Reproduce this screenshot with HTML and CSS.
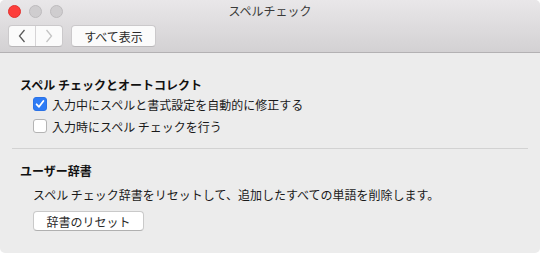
FILE: index.html
```html
<!DOCTYPE html>
<html lang="ja">
<head>
    <meta charset="UTF-8">
    <title>スペルチェック</title>
    <link rel="stylesheet" href="styles.css">
</head>
<body>
    <div class="window">
        <div class="toolbar">
            <div class="title-row">
                <div class="lights">
                    <span class="light red"></span>
                    <span class="light"></span>
                    <span class="light"></span>
                </div>
                <div class="title">スペルチェック</div>
            </div>
            <div class="tool-row">
                <div class="segmented">
                    <button class="seg">
                        <svg width="8" height="14" viewBox="0 0 8 14"><path d="M6.5 1 L1.5 7 L6.5 13" fill="none" stroke="#5a5a5a" stroke-width="1.3"/></svg>
                    </button>
                    <button class="seg">
                        <svg width="8" height="14" viewBox="0 0 8 14"><path d="M1.5 1 L6.5 7 L1.5 13" fill="none" stroke="#c4c4c4" stroke-width="1.3"/></svg>
                    </button>
                </div>
                <button class="tool-btn">すべて表示</button>
            </div>
        </div>

        <div class="content">
            <div class="section">
                <h2>スペル チェックとオートコレクト</h2>
                <label class="check-row">
                    <span class="box checked">
                        <svg width="14" height="14" viewBox="0 0 14 14"><path d="M3.6 7.3 L6 9.8 L10.4 4" fill="none" stroke="#fff" stroke-width="1.8" stroke-linecap="round" stroke-linejoin="round"/></svg>
                    </span>
                    入力中にスペルと書式設定を自動的に修正する
                </label>
                <label class="check-row">
                    <span class="box"></span>
                    入力時にスペル チェックを行う
                </label>
            </div>

            <hr class="divider">

            <div class="section">
                <h2>ユーザー辞書</h2>
                <p class="desc">スペル チェック辞書をリセットして、追加したすべての単語を削除します。</p>
                <button class="reset-btn">辞書のリセット</button>
            </div>
        </div>
    </div>
</body>
</html>
```

FILE: styles.css
```css
body {
    margin: 0;
    background-color: #fff;
    font-family: "Noto Sans CJK JP", "Liberation Sans", sans-serif;
    font-size: 12px;
    color: #1a1a1a;
}
.window {
    width: 540px;
    height: 253px;
    border-radius: 5px;
    overflow: hidden;
    background-color: #ececec;
}
.toolbar {
    height: 52px;
    background: linear-gradient(#e9e7e9, #d3d1d3);
    border-bottom: 1px solid #b3b1b3;
}
.title-row {
    height: 25px;
    display: flex;
    align-items: center;
    position: relative;
}
.lights {
    display: flex;
    gap: 8px;
    padding-left: 8px;
    margin-top: -2px;
}
.light {
    width: 11px;
    height: 11px;
    border-radius: 50%;
    background-color: #cfcdcf;
    border: 0.5px solid #bdbbbd;
}
.light.red {
    background-color: #fd3e3b;
    border-color: #e2322f;
}
.title {
    position: absolute;
    left: 0;
    right: 0;
    top: 3px;
    text-align: center;
    line-height: 16px;
    color: #3a3a3a;
}
.tool-row {
    display: flex;
    gap: 8px;
    padding-left: 8px;
}
.segmented {
    display: flex;
    width: 55px;
    height: 22px;
    box-sizing: border-box;
    background-color: #fbfbfb;
    border: 1px solid #cbc9cb;
    border-bottom-color: #b9b7b9;
    border-radius: 4px;
    overflow: hidden;
}
.seg {
    flex: 1;
    border: 0;
    padding: 0;
    margin: 0;
    background: transparent;
    display: flex;
    align-items: center;
    justify-content: center;
}
.seg + .seg {
    border-left: 1px solid #d6d4d6;
}
.tool-btn {
    width: 85px;
    height: 22px;
    padding: 0;
    font-family: inherit;
    font-size: 12px;
    color: #2a2a2a;
    background-color: #fbfbfb;
    border: 1px solid #cbc9cb;
    border-bottom-color: #b9b7b9;
    border-radius: 4px;
}
.content {
    padding: 24px 12px 0;
}
.section {
    padding-left: 8px;
}
h2 {
    margin: 0;
    font-size: 12px;
    font-weight: bold;
    line-height: 16px;
    color: #111;
}
.check-row {
    display: flex;
    align-items: center;
    gap: 5px;
    height: 22px;
    padding-left: 13px;
}
.box {
    width: 14px;
    height: 14px;
    box-sizing: border-box;
    border-radius: 3px;
    background-color: #fff;
    border: 1px solid #b4b4b4;
    display: flex;
}
.box.checked {
    background-color: #2d7bf5;
    border-color: #2a72e6;
}
.box.checked svg {
    margin: -1px;
}
.divider {
    margin: 11px 0 0;
    border: 0;
    height: 1px;
    background-color: #d2d2d2;
}
.section + .divider + .section {
    padding-top: 14px;
}
.desc {
    margin: 8px 0 0;
    padding-left: 13px;
    line-height: 16px;
}
.reset-btn {
    margin: 8px 0 0 13px;
    width: 111px;
    height: 20px;
    padding: 0;
    font-family: inherit;
    font-size: 12px;
    color: #2a2a2a;
    background-color: #fff;
    border: 1px solid #c9c9c9;
    border-bottom-color: #b0b0b0;
    border-radius: 4px;
}
```
